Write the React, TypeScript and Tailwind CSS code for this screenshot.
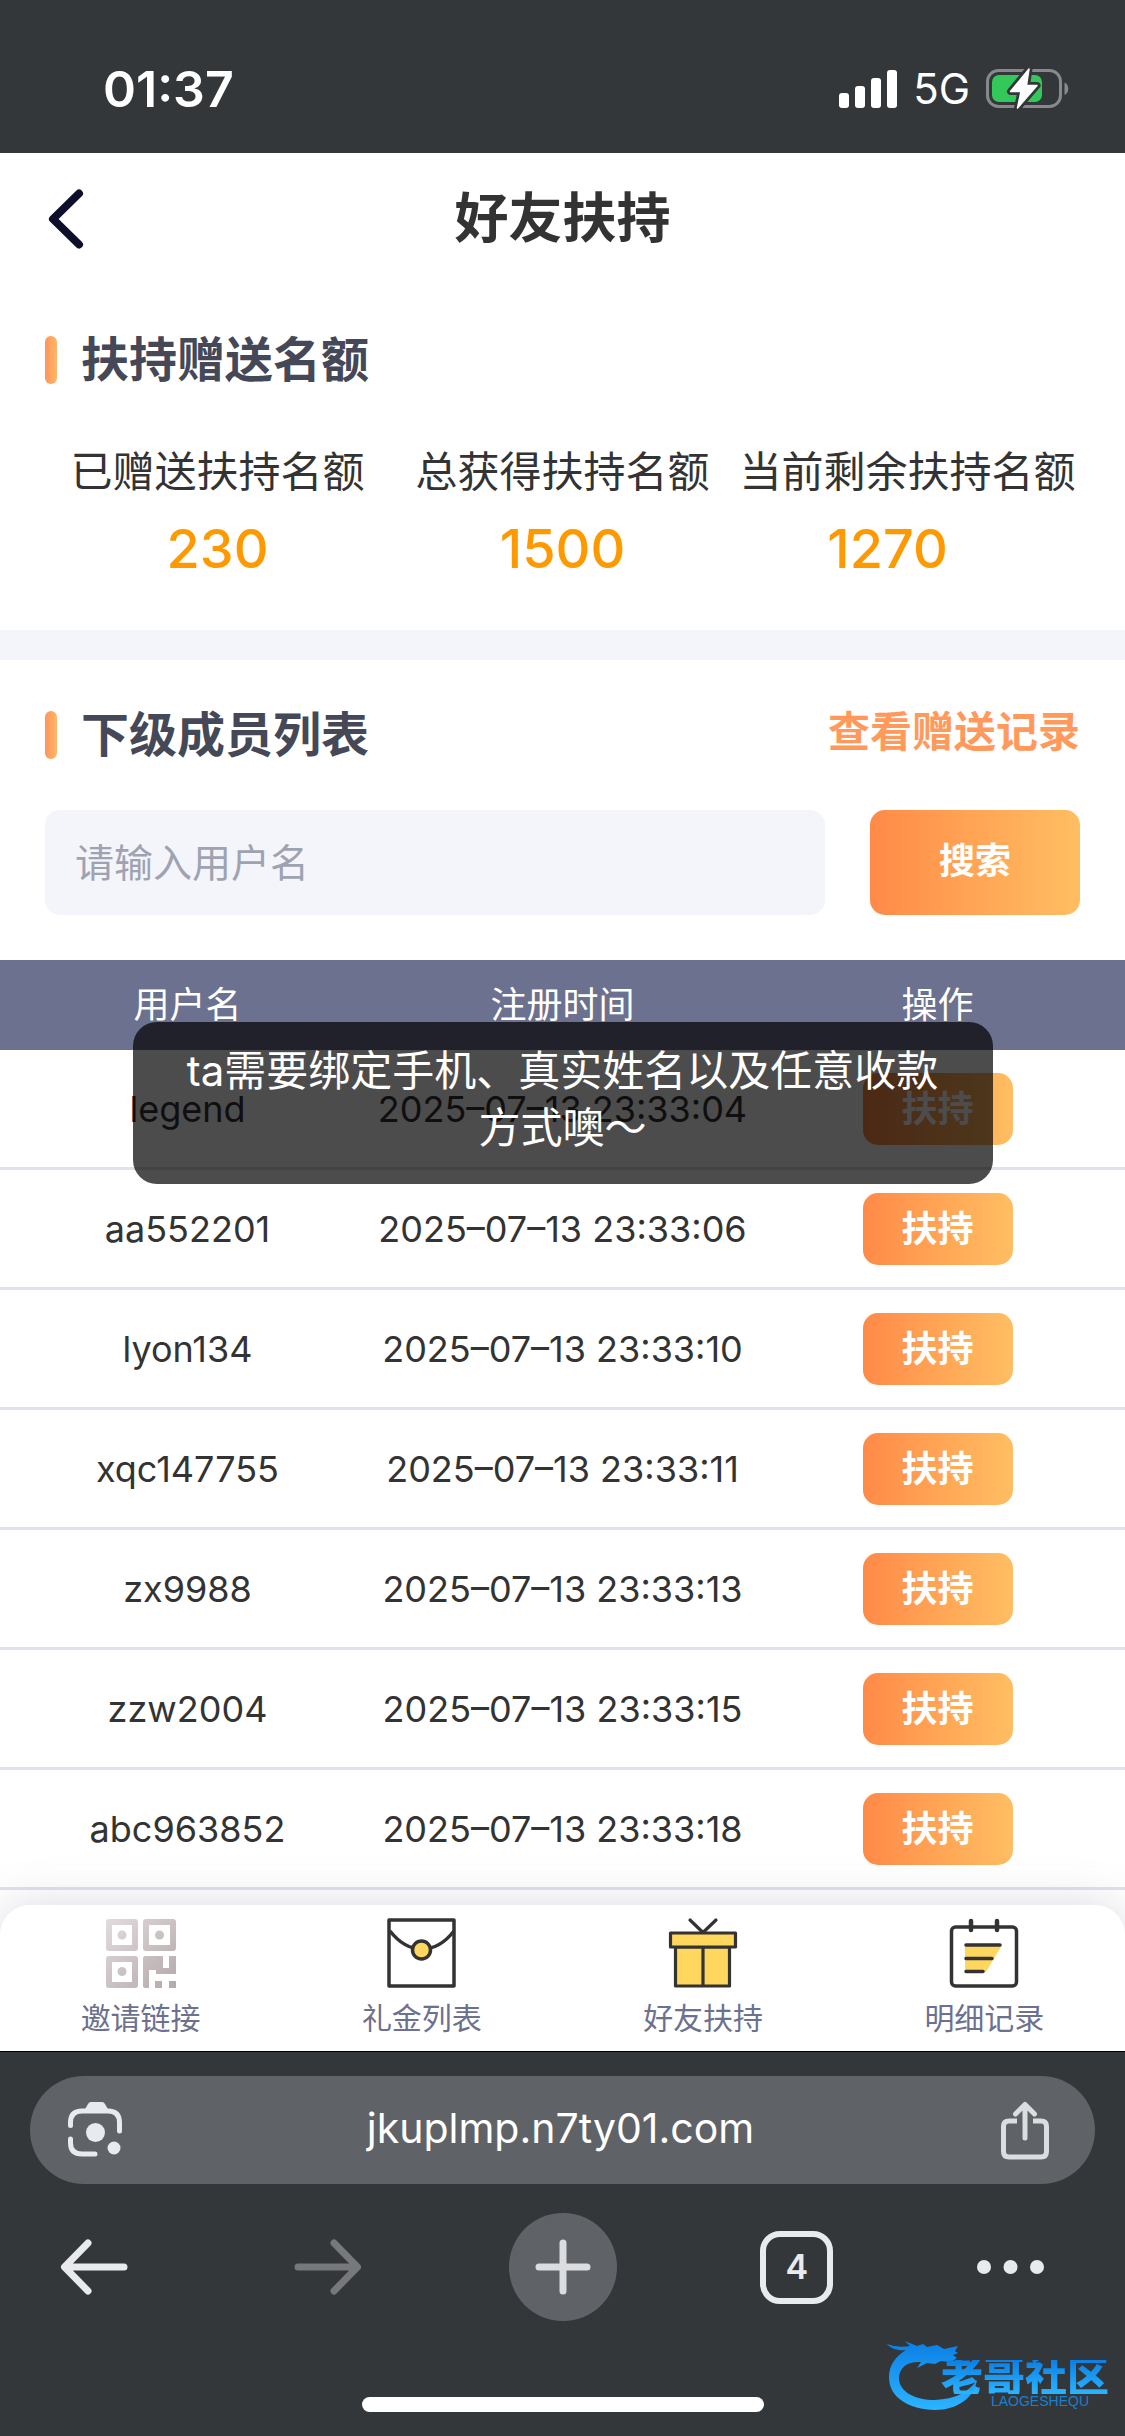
import type { ReactNode } from "react"

const members = [
    { name: "legend", time: "2025–07–13 23:33:04" },
    { name: "aa552201", time: "2025–07–13 23:33:06" },
    { name: "lyon134", time: "2025–07–13 23:33:10" },
    { name: "xqc147755", time: "2025–07–13 23:33:11" },
    { name: "zx9988", time: "2025–07–13 23:33:13" },
    { name: "zzw2004", time: "2025–07–13 23:33:15" },
    { name: "abc963852", time: "2025–07–13 23:33:18" },
]

export default function App() {
    return (
        <div className="flex min-h-screen flex-col bg-white font-['Inter','Noto_Sans_CJK_SC',sans-serif] text-[#333333]">
            <StatusBar />
            <Header />
            <main className="flex-1">
                <Quota />
                <Members />
            </main>
            <TabBar />
            <BrowserBar />
        </div>
    )
}

function StatusBar() {
    return (
        <div className="flex h-[153px] items-start justify-between bg-[#33373a] pt-[59px] pr-14 pl-[103px] text-white">
            <div className="text-[50px] leading-[60px] font-semibold">01:37</div>
            <div className="flex h-[60px] items-center">
                <svg width="58" height="38" viewBox="0 0 58 38" fill="currentColor">
                    <rect x="0" y="23" width="10" height="15" rx="3" />
                    <rect x="16" y="16" width="10" height="22" rx="3" />
                    <rect x="32" y="8" width="10" height="30" rx="3" />
                    <rect x="48" y="0" width="10" height="38" rx="3" />
                </svg>
                <span className="mx-4 text-[42px] leading-[60px]">5G</span>
                <svg width="83" height="42" viewBox="0 0 83 42">
                    <rect x="1.5" y="2.5" width="73" height="36" rx="11" fill="none" stroke="#87898c" strokeWidth="3" />
                    <path d="M78.500 14.500c5 2 5 10.500 0 12.500z" fill="#87898c" />
                    <rect x="6" y="7" width="50" height="27" rx="7" fill="#34c759" />
                    <path d="M43 1 24.500 23.500H35L31.500 40 51 17.500H40.500z" fill="#fff" stroke="#33373a" strokeWidth="7" strokeLinejoin="round" />
                    <path d="M43 1 24.500 23.500H35L31.500 40 51 17.500H40.500z" fill="#fff" stroke="#fff" strokeWidth="1.500" strokeLinejoin="round" />
                </svg>
            </div>
        </div>
    )
}

function Header() {
    return (
        <header className="grid h-[132px] grid-cols-3 items-center px-12">
            <button type="button" aria-label="返回" className="w-9">
                <svg width="36" height="60" viewBox="0 0 36 60" fill="none" stroke="#0d0f2b" strokeWidth="8" strokeLinecap="round" strokeLinejoin="round">
                    <path d="M31 4.500 5 30l26 25.500" />
                </svg>
            </button>
            <h1 className="text-center text-[54px] leading-[72px] font-bold">好友扶持</h1>
        </header>
    )
}

function SectionTitle({ children }: { children: ReactNode }) {
    return (
        <h2 className="flex items-center gap-6 text-[48px] leading-[72px] font-bold text-[#444857]">
            <span className="h-12 w-3 rounded-full bg-linear-to-r from-[#ff945a] to-[#ffb768]" />
            {children}
        </h2>
    )
}

function Quota() {
    return (
        <section className="border-b-[30px] border-[#f4f5fa] px-[45px] pt-[39px] pb-[42px]">
            <SectionTitle>扶持赠送名额</SectionTitle>
            <dl className="grid grid-cols-3 pt-[46px] text-center whitespace-nowrap">
                <div>
                    <dt className="text-[42px] leading-[60px]">已赠送扶持名额</dt>
                    <dd className="pt-2 text-[54px] leading-[78px] font-medium text-[#ff9900]">230</dd>
                </div>
                <div>
                    <dt className="text-[42px] leading-[60px]">总获得扶持名额</dt>
                    <dd className="pt-2 text-[54px] leading-[78px] font-medium text-[#ff9900]">1500</dd>
                </div>
                <div>
                    <dt className="text-[42px] leading-[60px]">当前剩余扶持名额</dt>
                    <dd className="pt-2 pr-10 text-[54px] leading-[78px] font-medium text-[#ff9900]">1270</dd>
                </div>
            </dl>
        </section>
    )
}

function Members() {
    return (
        <section className="pt-[39px]">
            <div className="flex items-start justify-between px-[45px]">
                <SectionTitle>下级成员列表</SectionTitle>
                <a href="#records" className="text-[42px] leading-[66px] font-bold text-[#ff9a5c]">查看赠送记录</a>
            </div>
            <form className="flex gap-[45px] px-[45px] pt-[39px] pb-[45px]">
                <input
                    type="text"
                    aria-label="用户名"
                    placeholder="请输入用户名"
                    className="h-[105px] min-w-0 flex-1 rounded-[15px] bg-[#f4f5fa] px-[30px] text-[39px] placeholder:text-[#9fa3b1]"
                />
                <button type="button" className="w-[210px] rounded-[15px] bg-linear-to-r from-[#ff8a48] to-[#ffbe62] pb-1 text-[36px] font-bold text-white">搜索</button>
            </form>
            <div className="relative">
                <table className="w-full table-fixed border-separate border-spacing-0 text-center text-[36px] leading-[54px]">
                    <thead className="bg-[#6b718e] text-white">
                        <tr className="h-[90px]">
                            <th className="font-normal">用户名</th>
                            <th className="font-normal">注册时间</th>
                            <th className="font-normal">操作</th>
                        </tr>
                    </thead>
                    <tbody>
                        {members.map((m) => (
                            <tr key={m.name} className="h-[120px]">
                                <td className="border-b-[3px] border-[#e0e1eb]">{m.name}</td>
                                <td className="border-b-[3px] border-[#e0e1eb] whitespace-nowrap">{m.time}</td>
                                <td className="border-b-[3px] border-[#e0e1eb]">
                                    <button type="button" className="h-[72px] w-[150px] rounded-[15px] bg-linear-to-r from-[#ff8a48] to-[#ffbe62] align-middle font-bold text-white">扶持</button>
                                </td>
                            </tr>
                        ))}
                    </tbody>
                </table>
                <Toast />
            </div>
        </section>
    )
}

function Toast() {
    return (
        <div className="absolute inset-x-0 top-[62px] flex justify-center">
            <div role="status" className="max-w-[860px] rounded-[24px] bg-black/70 px-12 pt-5 pb-7 text-center text-[42px] leading-[57px] text-white">
                ta需要绑定手机、真实姓名以及任意收款方式噢～
            </div>
        </div>
    )
}

function TabBar() {
    return (
        <nav className="relative mt-[15px] grid h-[146px] grid-cols-4 rounded-t-[30px] bg-white text-[30px] leading-[42px] text-[#6b718e] shadow-[0_0_45px_rgba(107,113,142,0.25)]">
            <TabItem href="#invite" label="邀请链接"><QrIcon /></TabItem>
            <TabItem href="#gifts" label="礼金列表"><EnvelopeIcon /></TabItem>
            <TabItem href="#support" label="好友扶持"><GiftIcon /></TabItem>
            <TabItem href="#details" label="明细记录"><CalendarIcon /></TabItem>
        </nav>
    )
}

function TabItem({ href, label, children }: { href: string; label: string; children: ReactNode }) {
    return (
        <a href={href} className="flex flex-col items-center gap-2 pt-3">
            {children}
            <span>{label}</span>
        </a>
    )
}

function QrIcon() {
    return (
        <svg width="72" height="72" viewBox="0 0 72 72">
            <defs>
                <linearGradient id="qr" x1="0" y1="0" x2="72" y2="72" gradientUnits="userSpaceOnUse">
                    <stop offset="0" stopColor="#e3dcde" />
                    <stop offset="1" stopColor="#b3a8aa" />
                </linearGradient>
            </defs>
            <g fill="none" stroke="url(#qr)" strokeWidth="6" strokeLinejoin="round">
                <rect x="4" y="5" width="26" height="26" />
                <rect x="41" y="5" width="27" height="26" />
                <rect x="4" y="42" width="26" height="26" />
            </g>
            <g fill="url(#qr)">
                <circle cx="17" cy="18" r="4.500" />
                <circle cx="54.500" cy="18" r="4.500" />
                <circle cx="17" cy="54.500" r="4.500" />
                <path d="M38 41q0-2 2-2h18v12h6V39h7v18H51v-4h-7v18h-4q-2 0-2-2z" />
                <rect x="50" y="64" width="7" height="7" />
                <rect x="64" y="64" width="7" height="7" />
            </g>
        </svg>
    )
}

function EnvelopeIcon() {
    return (
        <svg width="72" height="72" viewBox="0 0 72 72" fill="none" stroke="#333" strokeWidth="3.500" strokeLinejoin="round">
            <rect x="3" y="3" width="65" height="66" />
            <path d="M4 14q14 18 32 18t32-18" />
            <circle cx="35.500" cy="33" r="9" fill="#ffd75e" />
        </svg>
    )
}

function GiftIcon() {
    return (
        <svg width="72" height="72" viewBox="0 0 72 72" fill="#ffd75e" stroke="#333" strokeWidth="3.200" strokeLinecap="round" strokeLinejoin="round">
            <path d="M23 3l13 12.500L49 3" fill="none" />
            <rect x="8.500" y="30" width="54" height="39" />
            <rect x="3.500" y="16" width="65" height="14" />
            <path d="M36 31v37" />
        </svg>
    )
}

function CalendarIcon() {
    return (
        <svg width="72" height="72" viewBox="0 0 72 72" fill="none" stroke="#333" strokeWidth="3.500" strokeLinecap="round" strokeLinejoin="round">
            <rect x="3.500" y="10" width="65" height="59" rx="4" />
            <path d="M23 4v9M49 4v9" strokeWidth="4.500" />
            <path d="M17 28h37L38 55H17z" fill="#ffd75e" stroke="none" />
            <path d="M18 28h34M18 41.500h26M18 54.500h17" />
        </svg>
    )
}

function BrowserBar() {
    return (
        <footer className="relative border-t border-black bg-[#33373a] px-[30px] pt-6 pb-6 text-[#e8eaed]">
            <div className="flex h-[108px] items-center justify-between rounded-full bg-[#5f6367] pr-10 pl-9">
                <button type="button" aria-label="搜索图片">
                    <svg width="60" height="60" viewBox="0 0 60 60" fill="none" stroke="currentColor" strokeWidth="5" strokeLinecap="round">
                        <path d="M4.500 25.500v-3Q4.500 11 16 11h26q11.500 0 11.500 11.500V31" />
                        <path d="M4.500 39v4Q4.500 54 16 54h13" />
                        <path d="M18 11l4-7q1-2 3-2h11q2 0 3 2l4 7z" fill="currentColor" stroke="none" />
                        <circle cx="29.500" cy="32.500" r="9.500" fill="currentColor" stroke="none" />
                        <circle cx="48" cy="48" r="6.500" fill="currentColor" stroke="none" />
                    </svg>
                </button>
                <a href="#address" className="pb-1 text-[41px] leading-[60px] text-white">jkuplmp.n7ty01.com</a>
                <button type="button" aria-label="分享">
                    <svg width="60" height="60" viewBox="0 0 60 60" fill="none" stroke="#dcdde0" strokeWidth="5" strokeLinecap="round" strokeLinejoin="round">
                        <path d="M22 21h-8q-5.500 0-5.500 5.500v25Q8.500 57 14 57h32q5.500 0 5.500-5.500v-25Q51.500 21 46 21h-8" strokeLinecap="butt" />
                        <path d="M30 38V4.500M20.500 14 30 4.500 39.500 14" />
                    </svg>
                </button>
            </div>
            <div className="mt-[29px] flex h-[108px] items-center justify-between px-[10px]">
                <button type="button" aria-label="后退" className="flex w-[108px] justify-center">
                    <svg width="68" height="56" viewBox="0 0 68 56" fill="none" stroke="currentColor" strokeWidth="7" strokeLinecap="round" strokeLinejoin="round">
                        <path d="M64 28H5M28 4 4.500 28 28 52" />
                    </svg>
                </button>
                <button type="button" aria-label="前进" className="flex w-[108px] justify-center text-[#77787b]">
                    <svg width="68" height="56" viewBox="0 0 68 56" fill="none" stroke="currentColor" strokeWidth="7" strokeLinecap="round" strokeLinejoin="round">
                        <path d="M4 28h59M40 4l23.500 24L40 52" />
                    </svg>
                </button>
                <button type="button" aria-label="新标签页" className="flex size-[108px] items-center justify-center rounded-full bg-[#5f6367]">
                    <svg width="56" height="56" viewBox="0 0 56 56" stroke="#dcdde0" strokeWidth="7" strokeLinecap="round">
                        <path d="M4 28h48M28 4v48" />
                    </svg>
                </button>
                <button type="button" aria-label="标签页" className="flex w-[108px] justify-center">
                    <span className="flex size-[73px] items-center justify-center rounded-[20px] border-6 border-[#e8eaed] text-[34px] leading-[36px] font-semibold">4</span>
                </button>
                <button type="button" aria-label="更多" className="flex w-[108px] justify-start">
                    <svg width="68" height="14" viewBox="0 0 68 14" fill="currentColor">
                        <circle cx="7" cy="7" r="7" />
                        <circle cx="33.500" cy="7" r="7" />
                        <circle cx="60" cy="7" r="7" />
                    </svg>
                </button>
            </div>
            <div className="mx-auto mt-[76px] h-[15px] w-[402px] rounded-full bg-white" />
            <Watermark />
        </footer>
    )
}

function Watermark() {
    return (
        <div className="absolute right-4 bottom-6 flex h-[80px] w-[222px] flex-col items-end">
            <svg className="absolute inset-0" width="100" height="80" viewBox="0 0 100 80">
                <defs>
                    <linearGradient id="dragon" x1="0" y1="0" x2="0" y2="1">
                        <stop offset="0" stopColor="#0b7fe4" />
                        <stop offset="1" stopColor="#2cb4ff" />
                    </linearGradient>
                </defs>
                <path
                    d="M0 12q10 4 23 2L18 9l12 5 6-2 4 3 10-2 7 4 14-3-3 5 3 2-5 2 4 3-6 4-10-1-6 3-8-1-10 5 4-6C20 29 12 36 12 46c0 14 16 22 36 22 20-1 34-8 42-20-3 18-20 30-42 30C22 77 2 66 2 45 2 33 9 24 19 18 12 19 4 17 0 12z"
                    fill="url(#dragon)"
                />
            </svg>
            <div className="relative mt-7 bg-linear-to-b from-[#0b7fe4] to-[#2cb4ff] bg-clip-text text-[42px] leading-[34px] font-black text-transparent">老哥社区</div>
            <div className="relative pr-5 font-['Liberation_Sans',sans-serif] text-[14px] leading-[14px] text-[#1581d0]">LAOGESHEQU</div>
        </div>
    )
}
